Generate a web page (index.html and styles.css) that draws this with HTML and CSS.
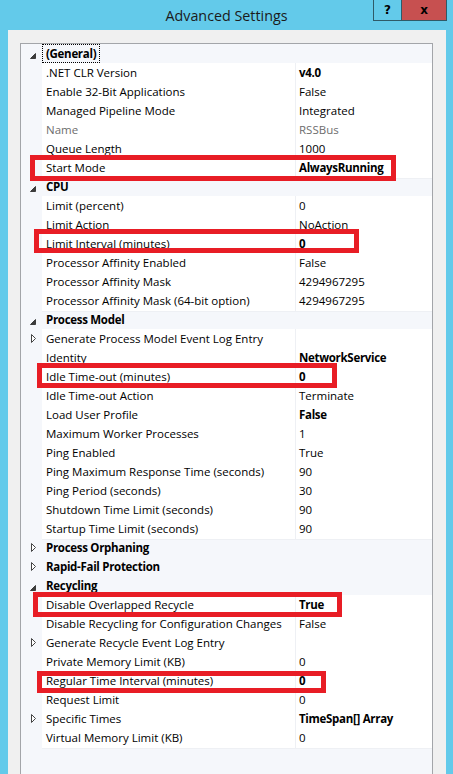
FILE: index.html
```html
<!DOCTYPE html>
<html>
<head>
<meta charset="utf-8">
<link rel="stylesheet" href="styles.css">
</head>
<body>
<div class="window">
  <div class="titlebar">
    <div class="spacer"></div>
    <div class="title">Advanced Settings</div>
    <div class="buttons">
      <div class="btn help">?</div>
      <div class="btn close">x</div>
    </div>
  </div>
  <div class="panel">
    <div class="grid">
      <div class="row cat"><div class="gut"><svg width="21" height="19"><polygon points="14.5,9.5 14.5,14.5 9.5,14.5" class="exp"/></svg></div><div class="cname"><span class="focus">(General)</span></div></div>
      <div class="row"><div class="gut"></div><div class="name">.NET CLR Version</div><div class="val b">v4.0</div></div>
      <div class="row"><div class="gut"></div><div class="name">Enable 32-Bit Applications</div><div class="val">False</div></div>
      <div class="row"><div class="gut"></div><div class="name">Managed Pipeline Mode</div><div class="val">Integrated</div></div>
      <div class="row"><div class="gut"></div><div class="name dis">Name</div><div class="val dis">RSSBus</div></div>
      <div class="row"><div class="gut"></div><div class="name">Queue Length</div><div class="val">1000</div></div>
      <div class="row"><div class="gut"></div><div class="name">Start Mode</div><div class="val b">AlwaysRunning</div></div>
      <div class="row cat"><div class="gut"><svg width="21" height="19"><polygon points="14.5,9.5 14.5,14.5 9.5,14.5" class="exp"/></svg></div><div class="cname">CPU</div></div>
      <div class="row"><div class="gut"></div><div class="name">Limit (percent)</div><div class="val">0</div></div>
      <div class="row"><div class="gut"></div><div class="name">Limit Action</div><div class="val">NoAction</div></div>
      <div class="row"><div class="gut"></div><div class="name">Limit Interval (minutes)</div><div class="val b">0</div></div>
      <div class="row"><div class="gut"></div><div class="name">Processor Affinity Enabled</div><div class="val">False</div></div>
      <div class="row"><div class="gut"></div><div class="name">Processor Affinity Mask</div><div class="val">4294967295</div></div>
      <div class="row"><div class="gut"></div><div class="name">Processor Affinity Mask (64-bit option)</div><div class="val">4294967295</div></div>
      <div class="row cat"><div class="gut"><svg width="21" height="19"><polygon points="14.5,9.5 14.5,14.5 9.5,14.5" class="exp"/></svg></div><div class="cname">Process Model</div></div>
      <div class="row"><div class="gut"><svg width="21" height="19"><polygon points="10.5,5.5 10.5,13.5 14.5,9.5" class="col"/></svg></div><div class="name">Generate Process Model Event Log Entry</div><div class="val"></div></div>
      <div class="row"><div class="gut"></div><div class="name">Identity</div><div class="val b">NetworkService</div></div>
      <div class="row"><div class="gut"></div><div class="name">Idle Time-out (minutes)</div><div class="val b">0</div></div>
      <div class="row"><div class="gut"></div><div class="name">Idle Time-out Action</div><div class="val">Terminate</div></div>
      <div class="row"><div class="gut"></div><div class="name">Load User Profile</div><div class="val b">False</div></div>
      <div class="row"><div class="gut"></div><div class="name">Maximum Worker Processes</div><div class="val">1</div></div>
      <div class="row"><div class="gut"></div><div class="name">Ping Enabled</div><div class="val">True</div></div>
      <div class="row"><div class="gut"></div><div class="name">Ping Maximum Response Time (seconds)</div><div class="val">90</div></div>
      <div class="row"><div class="gut"></div><div class="name">Ping Period (seconds)</div><div class="val">30</div></div>
      <div class="row"><div class="gut"></div><div class="name">Shutdown Time Limit (seconds)</div><div class="val">90</div></div>
      <div class="row"><div class="gut"></div><div class="name">Startup Time Limit (seconds)</div><div class="val">90</div></div>
      <div class="row cat"><div class="gut"><svg width="21" height="19"><polygon points="10.5,5.5 10.5,13.5 14.5,9.5" class="col"/></svg></div><div class="cname">Process Orphaning</div></div>
      <div class="row cat"><div class="gut"><svg width="21" height="19"><polygon points="10.5,5.5 10.5,13.5 14.5,9.5" class="col"/></svg></div><div class="cname">Rapid-Fail Protection</div></div>
      <div class="row cat"><div class="gut"><svg width="21" height="19"><polygon points="14.5,9.5 14.5,14.5 9.5,14.5" class="exp"/></svg></div><div class="cname">Recycling</div></div>
      <div class="row"><div class="gut"></div><div class="name">Disable Overlapped Recycle</div><div class="val b">True</div></div>
      <div class="row"><div class="gut"></div><div class="name">Disable Recycling for Configuration Changes</div><div class="val">False</div></div>
      <div class="row"><div class="gut"><svg width="21" height="19"><polygon points="10.5,5.5 10.5,13.5 14.5,9.5" class="col"/></svg></div><div class="name">Generate Recycle Event Log Entry</div><div class="val"></div></div>
      <div class="row"><div class="gut"></div><div class="name">Private Memory Limit (KB)</div><div class="val">0</div></div>
      <div class="row"><div class="gut"></div><div class="name">Regular Time Interval (minutes)</div><div class="val b">0</div></div>
      <div class="row"><div class="gut"></div><div class="name">Request Limit</div><div class="val">0</div></div>
      <div class="row"><div class="gut"><svg width="21" height="19"><polygon points="10.5,5.5 10.5,13.5 14.5,9.5" class="col"/></svg></div><div class="name">Specific Times</div><div class="val b">TimeSpan[] Array</div></div>
      <div class="row"><div class="gut"></div><div class="name">Virtual Memory Limit (KB)</div><div class="val">0</div></div>

      <div class="mark m1"></div>
      <div class="mark m2"></div>
      <div class="mark m3"></div>
      <div class="mark m4"></div>
      <div class="mark m5"></div>
    </div>
  </div>
</div>
</body>
</html>
```

FILE: styles.css
```css
* { box-sizing: border-box; }
html, body { margin: 0; padding: 0; }
body {
  width: 453px;
  height: 774px;
  overflow: hidden;
  font-family: "Open Sans", "Noto Sans", sans-serif;
  color: #000;
}
.window {
  width: 453px;
  height: 774px;
  background: #63caea;
  display: flex;
  flex-direction: column;
  padding: 0 7px 0 8px;
}
.titlebar {
  height: 30px;
  margin: 0 -7px 0 -8px;
  padding: 0 6px;
  display: grid;
  grid-template-columns: 1fr auto 1fr;
  flex: none;
}
.title {
  font-size: 14.3px;
  color: #1b1b1b;
  line-height: 30px;
  padding-top: 1px;
}
.buttons {
  display: flex;
  justify-self: end;
  align-self: start;
  height: 21px;
}
.btn {
  height: 21px;
  border: 1px solid #2f5a68;
  border-top: none;
  display: flex;
  align-items: center;
  justify-content: center;
  font-weight: 700;
  color: #000;
  font-family: "DejaVu Sans", sans-serif;
}
.help {
  width: 28px;
  background: #63caea;
  font-size: 12px;
  border-right: none;
}
.close {
  width: 46px;
  background: #c75050;
  font-size: 12px;
}
.panel {
  flex: 1;
  background: #f0f0f0;
  padding: 13px 13px 0 12px;
  display: flex;
  flex-direction: column;
}
.grid {
  flex: 1;
  position: relative;
  border: 1px solid #a3a5a9;
  border-bottom: none;
  background: #f5f7fb;
  font-size: 11.5px;
}
.row {
  display: grid;
  grid-template-columns: 21px 254px 1fr;
  height: 19px;
  line-height: 20px;
}
.gut { height: 19px; }
.gut svg { display: block; }
.exp { fill: #3c3c3c; stroke: #3c3c3c; stroke-width: 1; stroke-linejoin: miter; }
.col { fill: #ffffff; stroke: #444; stroke-width: 1; }
.name {
  background: #fff;
  border-bottom: 1px solid #eef0f4;
  border-right: 1px solid #eef0f4;
  padding-left: 4px;
  white-space: nowrap;
  overflow: visible;
}
.val {
  background: #fff;
  border-bottom: 1px solid #eef0f4;
  padding-left: 3px;
  white-space: nowrap;
}
.b { font-weight: 700; letter-spacing: -0.3px; }
.dis { color: #6d6d6d; }
.cat .cname {
  grid-column: 2 / 4;
  font-weight: 700;
  letter-spacing: -0.3px;
  padding-left: 4px;
}
.focus {
  display: inline-block;
  margin-left: -4px;
  padding: 0 3px;
  height: 19px;
  border: 1px dotted #000;
  line-height: 18px;
}
.mark {
  position: absolute;
  border: 5px solid #e81d25;
}
.m1 { left: 9px;  top: 111px; width: 366px; height: 26px; }
.m2 { left: 13px; top: 185px; width: 325px; height: 24px; }
.m3 { left: 16px; top: 319px; width: 300px; height: 25px; }
.m4 { left: 12px; top: 548px; width: 309px; height: 25px; }
.m5 { left: 16px; top: 627px; width: 289px; height: 22px; }
```
